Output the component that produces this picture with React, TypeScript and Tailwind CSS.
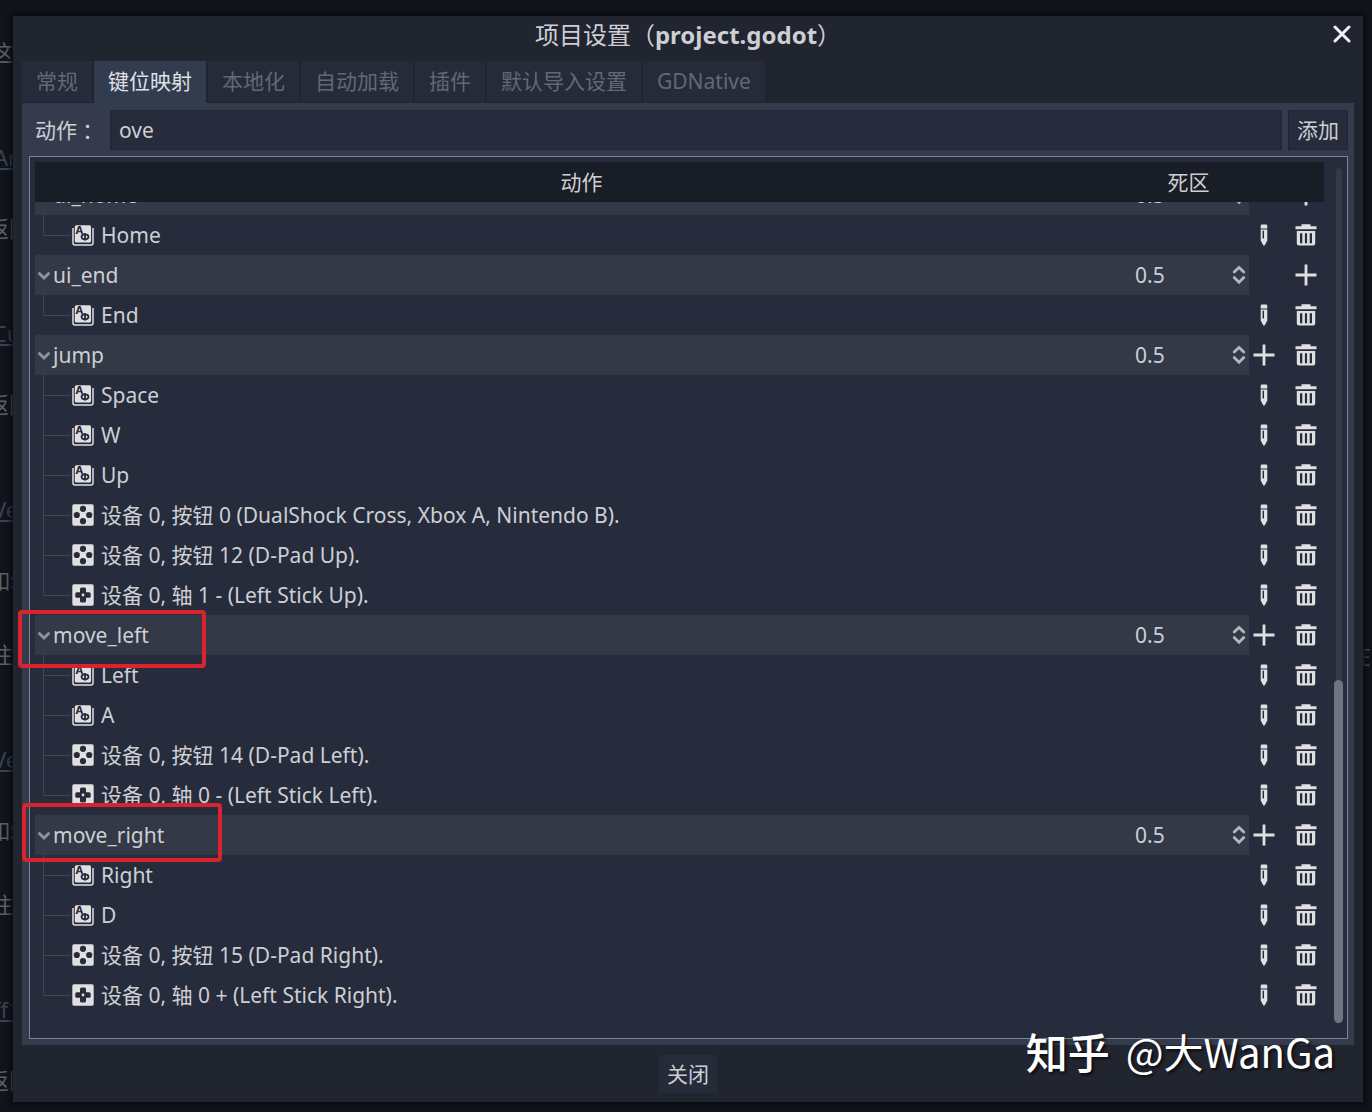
import React, { useState } from "react"
import clsx from "clsx"

type Device = "key" | "button" | "axis"

interface InputEvent {
  device: Device
  label: string
}

interface Action {
  name: string
  builtin?: boolean
  mark?: string
  events: InputEvent[]
}

const TABS = ["常规", "键位映射", "本地化", "自动加载", "插件", "默认导入设置", "GDNative"]

const ACTIONS: Action[] = [
  { name: "ui_home", builtin: true, events: [{ device: "key", label: "Home" }] },
  { name: "ui_end", builtin: true, events: [{ device: "key", label: "End" }] },
  {
    name: "jump",
    events: [
      { device: "key", label: "Space" },
      { device: "key", label: "W" },
      { device: "key", label: "Up" },
      { device: "button", label: "设备 0, 按钮 0 (DualShock Cross, Xbox A, Nintendo B)." },
      { device: "button", label: "设备 0, 按钮 12 (D-Pad Up)." },
      { device: "axis", label: "设备 0, 轴 1 - (Left Stick Up)." },
    ],
  },
  {
    name: "move_left",
    mark: "-left-[17px] -top-[5px] h-[58px] w-[188px]",
    events: [
      { device: "key", label: "Left" },
      { device: "key", label: "A" },
      { device: "button", label: "设备 0, 按钮 14 (D-Pad Left)." },
      { device: "axis", label: "设备 0, 轴 0 - (Left Stick Left)." },
    ],
  },
  {
    name: "move_right",
    mark: "-left-[13px] -top-[12px] h-[59px] w-[200px]",
    events: [
      { device: "key", label: "Right" },
      { device: "key", label: "D" },
      { device: "button", label: "设备 0, 按钮 15 (D-Pad Right)." },
      { device: "axis", label: "设备 0, 轴 0 + (Left Stick Right)." },
    ],
  },
]

// Documentation page dimmed behind the dialog
const BACKDROP = [
  { text: "这", place: "top-[37px] -left-[9px]", link: false },
  { text: "Ar", place: "top-[142px] -left-[6px]", link: true },
  { text: "返回", place: "top-[213px] -left-[13px]", link: false },
  { text: "Cu", place: "top-[318px] -left-[7px]", link: true },
  { text: "返回", place: "top-[389px] -left-[13px]", link: false },
  { text: "Ve", place: "top-[494px] -left-[7px]", link: true },
  { text: "如:", place: "top-[565px] -left-[12px]", link: false },
  { text: "注", place: "top-[639px] -left-[9px]", link: false },
  { text: "Ve", place: "top-[744px] -left-[7px]", link: true },
  { text: "如:", place: "top-[815px] -left-[12px]", link: false },
  { text: "注", place: "top-[889px] -left-[9px]", link: false },
  { text: "ff1", place: "top-[994px] -left-[7px]", link: true },
  { text: "返回", place: "top-[1065px] -left-[13px]", link: false },
]

const KeyIcon = () => (
  <svg className="size-[22px]" viewBox="0 0 22 22" aria-hidden="true">
    <path d="M1 4V19a2 2 0 0 0 2 2H19a2 2 0 0 0 2-2V4" fill="none" stroke="#e0e0e0" strokeWidth="1.5" />
    <rect x="2.8" y="1.2" width="16.2" height="17.2" rx="1.5" fill="#e0e0e0" />
    <text x="3.6" y="9.6" fontSize="10" fontWeight="700" fontFamily="DejaVu Sans" fill="#262c3b">
      A
    </text>
    <ellipse cx="13" cy="12.8" rx="3.5" ry="2.5" fill="none" stroke="#262c3b" strokeWidth="1.8" />
    <path d="M13 9V16.6" stroke="#262c3b" strokeWidth="1.8" />
  </svg>
)

const ButtonIcon = () => (
  <svg className="size-[22px]" viewBox="0 0 22 22" aria-hidden="true">
    <rect x="0.3" y="0.3" width="21.4" height="21.4" rx="1.6" fill="#e0e0e0" />
    <g fill="#262c3b">
      <circle cx="11" cy="4.8" r="3.1" />
      <circle cx="11" cy="17.2" r="3.1" />
      <circle cx="4.8" cy="11" r="3.1" />
      <circle cx="17.2" cy="11" r="3.1" />
    </g>
  </svg>
)

const AxisIcon = () => (
  <svg className="size-[22px]" viewBox="0 0 22 22" aria-hidden="true">
    <rect x="0.3" y="0.3" width="21.4" height="21.4" rx="1.6" fill="#e0e0e0" />
    <rect x="8" y="3.5" width="6" height="15" rx="1.5" fill="#262c3b" />
    <rect x="3.3" y="8.2" width="15.4" height="5.6" rx="1.5" fill="#262c3b" />
    <circle cx="11" cy="11" r="1.4" fill="#e0e0e0" />
  </svg>
)

const PlusIcon = () => (
  <svg className="size-[22px]" viewBox="0 0 22 22" aria-hidden="true">
    <path d="M11 0.5V21.5M0.5 11H21.5" stroke="#e0e0e0" strokeWidth="2.8" />
  </svg>
)

const PencilIcon = () => (
  <svg className="size-[22px]" viewBox="0 0 22 22" aria-hidden="true">
    <path d="M7.7 4.4V1.8Q7.7 0.5 9 0.5H13Q14.3 0.5 14.3 1.8V4.4Z" fill="#e0e0e0" />
    <path d="M7.7 5.4H14.3V16.5L11.7 21.5H10.3L7.7 16.5ZM9.6 6.8V14.6H11V6.8Z" fill="#e0e0e0" fillRule="evenodd" />
  </svg>
)

const TrashIcon = () => (
  <svg className="size-[22px]" viewBox="0 0 22 22" aria-hidden="true">
    <path d="M6.5 0.3H15.5V2.2H21.5V5.2H0.5V2.2H6.5Z" fill="#e0e0e0" />
    <path
      d="M1.8 7H20.2V19.5Q20.2 21.6 18.1 21.6H3.9Q1.8 21.6 1.8 19.5ZM5 9.3V19.2H7.3V9.3ZM9.9 9.3V19.2H12.1V9.3ZM14.7 9.3V19.2H17V9.3Z"
      fill="#e0e0e0"
      fillRule="evenodd"
    />
  </svg>
)

const DEVICE_ICONS = { key: KeyIcon, button: ButtonIcon, axis: AxisIcon }

// Full-width punctuation, centred in its square
const Punct = ({ children }: { children: React.ReactNode }) => (
  <span lang="zh-TW" className="font-['Noto_Sans_CJK_TC',sans-serif]">
    {children}
  </span>
)

const Columns = () => (
  <colgroup>
    <col />
    <col className="w-[121px]" />
    <col className="w-[75px]" />
  </colgroup>
)

interface IconButtonProps {
  label: string
  children: React.ReactNode
}

const IconButton = ({ label, children }: IconButtonProps) => (
  <button type="button" aria-label={label} className="flex h-10 w-[30px] items-center justify-center">
    {children}
  </button>
)

const ActionRow = ({ action }: { action: Action }) => (
  <tr>
    <td className="h-10 bg-[#333946] p-0">
      <div className="relative flex h-10 items-center pl-[3px]">
        <button type="button" aria-label={`折叠 ${action.name}`} className="mr-[3px]">
          <svg className="size-3" viewBox="0 0 12 12" aria-hidden="true">
            <path d="M1.4 4.6L6 9L10.6 4.6" fill="none" stroke="#8f939c" strokeWidth="2.8" strokeLinecap="round" />
          </svg>
        </button>
        <span>{action.name}</span>
        {action.mark && (
          <span className={clsx("pointer-events-none absolute z-10 rounded-sm border-4 border-[#d9232e]", action.mark)} />
        )}
      </div>
    </td>
    <td className="h-10 bg-[#333946] p-0">
      <div className="flex h-10 items-center justify-between pr-[3px] pl-[7px]">
        <input
          type="text"
          inputMode="decimal"
          aria-label={`${action.name} 死区`}
          defaultValue="0.5"
          className="w-16 bg-transparent outline-none"
        />
        <svg className="h-5 w-[14px]" viewBox="0 0 14 20" aria-hidden="true">
          <path
            d="M2.2 7L7 2.4L11.8 7M2.2 12.6L7 17.2L11.8 12.6"
            fill="none"
            stroke="#b3b6bc"
            strokeWidth="2.8"
            strokeLinecap="round"
          />
        </svg>
      </div>
    </td>
    <td className="h-10 p-0">
      <div className="flex justify-end gap-3 pr-[3px]">
        <IconButton label="添加事件">
          <PlusIcon />
        </IconButton>
        {!action.builtin && (
          <IconButton label="移除动作">
            <TrashIcon />
          </IconButton>
        )}
      </div>
    </td>
  </tr>
)

interface EventRowProps {
  event: InputEvent
  last: boolean
}

const EventRow = ({ event, last }: EventRowProps) => {
  const Icon = DEVICE_ICONS[event.device]

  return (
    <tr>
      <td className="h-10 p-0" colSpan={2}>
        <div className="flex h-10 items-center pl-2">
          <div className={clsx("w-px bg-[#414856]", last ? "h-5 self-start" : "h-10")} />
          <div className="mr-px h-px w-[27px] bg-[#414856]" />
          <Icon />
          <span className="ml-[7px]">{event.label}</span>
        </div>
      </td>
      <td className="h-10 p-0">
        <div className="flex justify-end gap-3 pr-[3px]">
          <IconButton label="编辑">
            <PencilIcon />
          </IconButton>
          <IconButton label="移除">
            <TrashIcon />
          </IconButton>
        </div>
      </td>
    </tr>
  )
}

const InputMap = () => (
  <div className="flex border border-[#7d8494] bg-[#262c3b] pt-[5px] pr-1 pb-[23px] pl-[5px]">
    <div className="min-w-0 flex-1">
      <table className="relative z-10 w-full table-fixed border-collapse bg-[#191d26]">
        <Columns />
        <thead>
          <tr className="h-10">
            <th className="p-0 text-center font-normal">动作</th>
            <th className="p-0 text-center font-normal">死区</th>
            <td />
          </tr>
        </thead>
      </table>

      {/* scrolled part way, so the first row sits under the header */}
      <table className="-mt-[27px] w-full table-fixed border-collapse">
        <Columns />
        <tbody>
          {ACTIONS.map((action) => (
            <React.Fragment key={action.name}>
              <ActionRow action={action} />
              {action.events.map((event, i) => (
                <EventRow event={event} last={i === action.events.length - 1} key={event.label} />
              ))}
            </React.Fragment>
          ))}
        </tbody>
      </table>
    </div>

    <div className="mt-[6px] -mb-2 ml-[10px] flex w-[9px] flex-col items-center">
      <div className="w-[6px] flex-1 rounded-t-full bg-[#343a47]" />
      <div className="h-[343px] w-[9px] rounded-full bg-[#6f7480]" />
    </div>
  </div>
)

const Backdrop = () => (
  <div className="absolute inset-0 overflow-hidden text-[22px] leading-[30px] whitespace-nowrap" aria-hidden="true">
    {BACKDROP.map(({ text, place, link }) => (
      <span
        className={clsx("absolute", place, link ? "text-[#3a4553] underline" : "text-[#5f6166]")}
        key={place}
      >
        {text}
      </span>
    ))}
    <span className="absolute top-[640px] right-px text-[#4c4e53]">在</span>
  </div>
)

export default function App() {
  const [activeTab, setActiveTab] = useState("键位映射")

  return (
    <div className="relative min-h-screen overflow-hidden bg-[#11141b] pt-4 pr-[9px] pb-[10px] pl-[13px] font-['Noto_Sans','Noto_Sans_CJK_SC',sans-serif] text-[21px] leading-[30px] text-[#cdcfd4]">
      <Backdrop />

      <div
        role="dialog"
        aria-labelledby="dialog-title"
        className="relative bg-[#21252f] pr-[9px] pb-[9px] pl-[9px] shadow-[0_0_6px_2px_#080a10]"
      >
        <div className="relative flex h-[45px] justify-center pt-0.5">
          <h1 id="dialog-title" className="text-2xl">
            项目设置<Punct>（</Punct>
            <b>project.godot</b>
            <Punct>）</Punct>
          </h1>
          <button type="button" aria-label="关闭窗口" className="absolute top-[9px] right-[3px]">
            <svg className="size-[18px]" viewBox="0 0 18 18" aria-hidden="true">
              <path d="M2 2L16 16M16 2L2 16" stroke="#f0f0f2" strokeWidth="3" strokeLinecap="round" />
            </svg>
          </button>
        </div>

        <div role="tablist" className="flex h-[42px] gap-0.5">
          {TABS.map((tab) => (
            <button
              type="button"
              role="tab"
              aria-selected={tab === activeTab}
              onClick={() => setActiveTab(tab)}
              className={clsx(
                "px-[14px]",
                tab === activeTab ? "bg-[#333b4f] pb-0.5 text-[#dfe1e6]" : "mb-px bg-[#262b39] pb-px text-[#646872]"
              )}
              key={tab}
            >
              {tab}
            </button>
          ))}
        </div>

        <div role="tabpanel" className="bg-[#333b4c] pt-[7px] pr-[6px] pb-[6px] pl-[7px]">
          <form className="mb-[6px] flex gap-[6px] pl-[6px]" onSubmit={(e) => e.preventDefault()}>
            <label htmlFor="action-name" className="flex w-[69px] items-center whitespace-nowrap">
              动作<Punct>：</Punct>
            </label>
            <input
              id="action-name"
              type="text"
              defaultValue="ove"
              className="h-10 min-w-0 flex-1 border border-[#202533] bg-[#262c3b] px-2 outline-none"
            />
            <button type="submit" className="h-10 w-[60px] border border-[#202533] bg-[#262c3b]">
              添加
            </button>
          </form>

          <InputMap />
        </div>

        <div className="flex justify-center pt-[10px]">
          <button type="button" className="h-[38px] w-[58px] bg-[#262b39]">
            关闭
          </button>
        </div>
      </div>

      <div className="absolute right-[37px] bottom-[31px] flex gap-4 font-['Noto_Sans_CJK_SC',sans-serif] text-[40px] leading-[60px] text-white [text-shadow:2px_2px_3px_#000000b0]">
        <span className="text-[42px] font-medium">知乎</span>
        <span>@大WanGa</span>
      </div>
    </div>
  )
}
